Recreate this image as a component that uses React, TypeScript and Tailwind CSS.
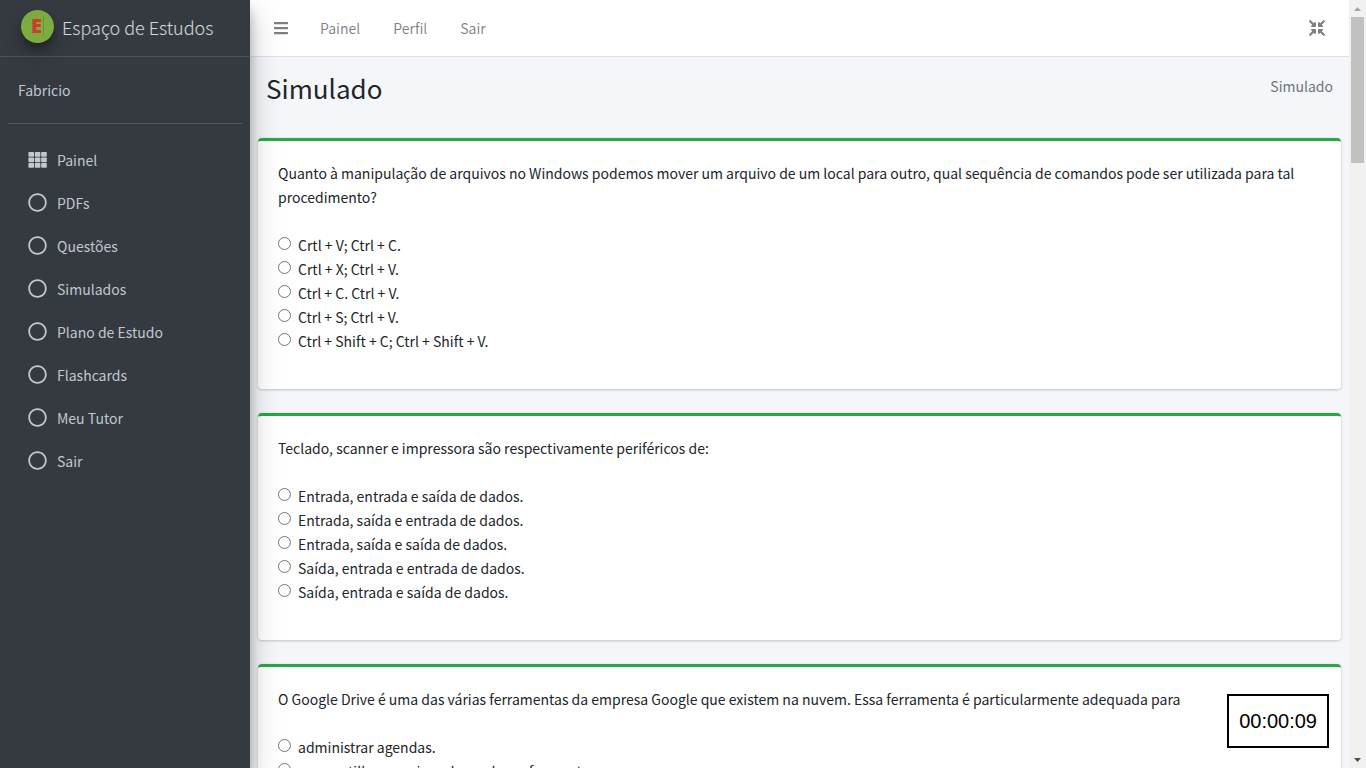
import { useState } from "react";
import { FaBars, FaCompressArrowsAlt, FaRegCircle } from "react-icons/fa";

const menu = ["PDFs", "Questões", "Simulados", "Plano de Estudo", "Flashcards", "Meu Tutor", "Sair"];

const topLinks = ["Painel", "Perfil", "Sair"];

const questions = [
  {
    text: "Quanto à manipulação de arquivos no Windows podemos mover um arquivo de um local para outro, qual sequência de comandos pode ser utilizada para tal procedimento?",
    options: [
      "Crtl + V; Ctrl + C.",
      "Crtl + X; Ctrl + V.",
      "Ctrl + C. Ctrl + V.",
      "Ctrl + S; Ctrl + V.",
      "Ctrl + Shift + C; Ctrl + Shift + V.",
    ],
  },
  {
    text: "Teclado, scanner e impressora são respectivamente periféricos de:",
    options: [
      "Entrada, entrada e saída de dados.",
      "Entrada, saída e entrada de dados.",
      "Entrada, saída e saída de dados.",
      "Saída, entrada e entrada de dados.",
      "Saída, entrada e saída de dados.",
    ],
  },
  {
    text: "O Google Drive é uma das várias ferramentas da empresa Google que existem na nuvem. Essa ferramenta é particularmente adequada para",
    options: ["administrar agendas.", "compartilhar arquivos de modo performante."],
  },
];

function GridIcon() {
  return (
    <svg className="h-4 w-[19px]" viewBox="0 0 19 16" fill="currentColor" aria-hidden="true">
      {[0, 5.5, 11].map((y) =>
        [0.4, 6.8, 13.2].map((x) => <rect key={`${x}-${y}`} x={x} y={y} width="5.6" height="4.8" rx="0.8" />)
      )}
    </svg>
  );
}

function Logo() {
  return (
    <span className="flex size-[33px] items-center justify-center gap-px rounded-full bg-[#7cab3f] shadow-[0_10px_20px_rgba(0,0,0,0.19),0_6px_6px_rgba(0,0,0,0.23)]">
      <span className="font-['Open_Sans',sans-serif] text-xl leading-none font-extrabold text-[#cf3b2d]">E</span>
      <span className="h-5 w-px bg-[#6a9436]" />
    </span>
  );
}

function Sidebar() {
  return (
    <aside className="z-20 w-[250px] shrink-0 bg-[#343a40] text-[#c2c7d0] shadow-[0_14px_28px_rgba(0,0,0,0.25),0_10px_10px_rgba(0,0,0,0.22)]">
      <a href="#" className="flex h-[57px] items-center gap-2 border-b border-[#4b545c] pb-1 pl-[21px] text-lg font-light text-white/80">
        <Logo />
        <span className="pt-[2px]">Espaço de Estudos</span>
      </a>
      <div className="px-2">
        <div className="flex h-[67px] items-center border-b border-[#4f5962] pl-[10px]">
          <a href="#">Fabricio</a>
        </div>
        <nav className="mt-[14px]">
          <a href="#" className="flex h-[43px] items-center gap-[10px] pl-[20px]">
            <GridIcon />
            Painel
          </a>
          {menu.map((item) => (
            <a key={item} href="#" className="flex h-[43px] items-center gap-[10px] pl-[20px]">
              <FaRegCircle className="size-[19px]" />
              {item}
            </a>
          ))}
        </nav>
      </div>
    </aside>
  );
}

function Question({ index }: { index: number }) {
  const [picked, setPicked] = useState<number | null>(null);
  const q = questions[index];
  return (
    <fieldset className="mb-6 rounded border-t-[3px] border-[#28a745] bg-white px-5 pt-5 pb-9 shadow-[0_0_1px_rgba(0,0,0,0.125),0_1px_3px_rgba(0,0,0,0.2)]">
      <p className="mb-6">{q.text}</p>
      {q.options.map((option, i) => (
        <label key={option} className="flex h-6 items-center">
          <input
            type="radio"
            name={`question-${index}`}
            checked={picked === i}
            onChange={() => setPicked(i)}
            className="mr-[7px] mb-1 size-[13px]"
          />
          {option}
        </label>
      ))}
    </fieldset>
  );
}

function Scrollbar() {
  return (
    <div className="flex w-[17px] shrink-0 flex-col items-center bg-[#f1f1f1]" aria-hidden="true">
      <svg className="size-[17px]" viewBox="0 0 17 17">
        <path d="M5 11l3.500-4 3.500 4z" fill="#a3a3a3" />
      </svg>
      <div className="h-[146px] w-[13px] bg-[#c1c1c1]" />
      <svg className="mt-auto size-[17px]" viewBox="0 0 17 17">
        <path d="M5 7l3.500 4 3.500-4z" fill="#505050" />
      </svg>
    </div>
  );
}

export default function App() {
  return (
    <div className="flex h-screen overflow-hidden bg-[#f4f6f9] font-['Noto_Sans_CJK_JP',sans-serif] text-sm leading-6 text-[#212529]">
      <Sidebar />
      <div className="flex min-w-0 flex-1 flex-col">
        <header className="flex h-[57px] shrink-0 items-center border-b border-[#dee2e6] bg-white pr-6 pl-[23px] text-black/50">
          <button type="button" aria-label="Menu">
            <FaBars className="size-4" />
          </button>
          <nav className="ml-[31px] flex flex-1 gap-[33px]">
            {topLinks.map((link) => (
              <a key={link} href="#">
                {link}
              </a>
            ))}
          </nav>
          <button type="button" aria-label="Tela cheia">
            <FaCompressArrowsAlt className="size-4" />
          </button>
        </header>
        <main className="min-h-0 flex-1 overflow-hidden px-2">
          <div className="flex h-[81px] items-start justify-between px-2 pt-[13px]">
            <h1 className="text-[26px] leading-9">Simulado</h1>
            <span className="pt-1 text-[#6c757d]">Simulado</span>
          </div>
          {questions.map((q, i) => (
            <Question key={q.text} index={i} />
          ))}
        </main>
      </div>
      <Scrollbar />
      <div role="timer" className="fixed right-[37px] bottom-5 border-2 border-black bg-white px-[10px] py-3 font-['Liberation_Sans',sans-serif] text-xl leading-[26px] text-black">
        00:00:09
      </div>
    </div>
  );
}
